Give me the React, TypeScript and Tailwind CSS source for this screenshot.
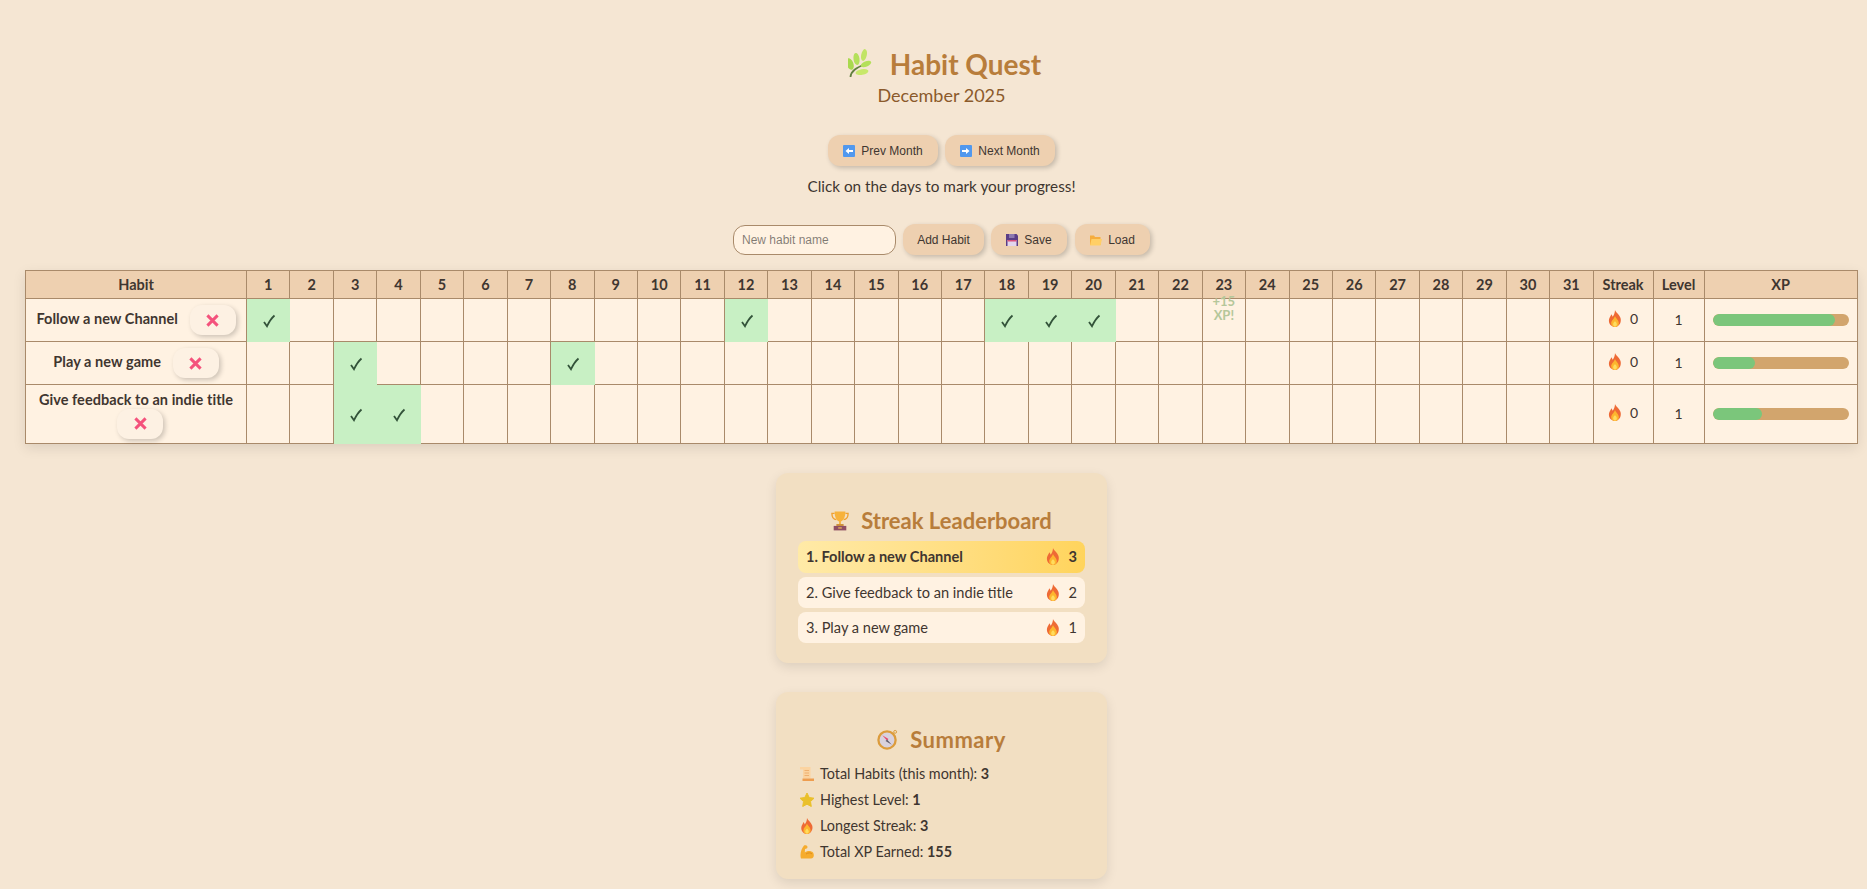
const days = Array.from({ length: 31 }, (_, i) => i + 1);

const Flame = ({ className = "w-[14px] h-[17px]" }: { className?: string }) => (
  <svg viewBox="0 0 16 20" className={`inline-block ${className}`}>
    <path d="M8 0c1 3 5 5 6.500 9.500C16 15 12.500 20 8 20S0 16 1 11c.5-2.500 2-3.500 2.500-6 1 1 1.500 2 1.800 3C6.500 6 8 3.500 8 0z" fill="#ee6a35" />
    <path d="M8 7c.5 2.500 4.500 4.500 4.500 8.500 0 2.500-2 4.500-4.500 4.500s-4.500-2-4.500-4.500C3.500 12.500 7 10.500 8 7z" fill="#fdb52e" />
    <path d="M8 13c.5 1 2.200 2 2.200 3.800C10.200 18.500 9 19.500 8 19.500s-2.200-1-2.200-2.700C5.800 15 7.500 14 8 13z" fill="#ffdc5e" />
  </svg>
);

const Check = () => (
  <svg viewBox="0 0 14 14" className="inline-block w-[14px] h-[14px]">
    <path d="M2 8l3 4.200C7 8 9 4.500 12.500 1.500" fill="none" stroke="#33533a" strokeWidth="1.800" />
  </svg>
);

const Cross = () => (
  <svg viewBox="0 0 14 14" className="w-[13px] h-[13px]">
    <path d="M1.500 1.500l11 11M12.500 1.500l-11 11" stroke="#f4527c" strokeWidth="3.200" />
  </svg>
);

const ArrowBox = ({ dir }: { dir: "left" | "right" }) => (
  <svg viewBox="0 0 12 12" className="w-3 h-3">
    <rect width="12" height="12" rx="1" fill="#5198ee" />
    <path d={dir === "left" ? "M2.500 6L6 3v2h4v2H6v2z" : "M9.500 6L6 3v2H2v2h4v2z"} fill="#fff" />
  </svg>
);

const Herb = () => (
  <svg viewBox="12 4 24 30" className="w-[24px] h-[30px]">
    <path d="M14.500 32C15 26 20 23 29 19" fill="none" stroke="#62803f" strokeWidth="1.800" />
    <ellipse cx="14" cy="19" rx="3.400" ry="6" transform="rotate(-20 14 19)" fill="#a9d94e" />
    <ellipse cx="20.500" cy="14" rx="3" ry="6" transform="rotate(-8 20.500 14)" fill="#b4e05a" />
    <ellipse cx="28" cy="10" rx="2.800" ry="6" transform="rotate(12 28 10)" fill="#c2e465" />
    <ellipse cx="30" cy="19" rx="2.600" ry="5.500" transform="rotate(68 30 19)" fill="#b4e05a" />
    <ellipse cx="26" cy="27" rx="2.800" ry="6.500" transform="rotate(80 26 27)" fill="#c8e86a" />
  </svg>
);

const Floppy = () => (
  <svg viewBox="0 0 12 12" className="w-3 h-3">
    <path d="M0 0h10.500L12 1.500V12H0z" fill="#5a3d86" />
    <rect x="3" y="0" width="5.500" height="4" fill="#8c78b0" />
    <rect x="1.500" y="6" width="9" height="6" fill="#e2d6ee" />
    <rect x="1.500" y="6" width="9" height="1.500" fill="#d8517c" />
  </svg>
);

const Folder = () => (
  <svg viewBox="0 0 12 12" className="w-3 h-3">
    <path d="M0 1.500h4l1 1.500h5.500v8H0z" fill="#f5ad3f" />
    <path d="M1.500 5H12l-1.500 6.500H0z" fill="#ffcf66" />
  </svg>
);

const Trophy = () => (
  <svg viewBox="0 0 20 22" className="w-[18px] h-[21px]">
    <path d="M4 3H1c0 5 2 7 5 7M16 3h3c0 5-2 7-5 7" fill="none" stroke="#f0a030" strokeWidth="1.500" />
    <path d="M4 1h12c0 6-2 10-5 11v3H9v-3C6 11 4 7 4 1z" fill="#f7b23b" />
    <rect x="6" y="15" width="8" height="2" fill="#c98a2e" />
    <rect x="3" y="17" width="14" height="5" fill="#8f4f63" />
    <rect x="8" y="18.500" width="4" height="1.500" fill="#e6b15a" />
  </svg>
);

const Compass = () => (
  <svg viewBox="0 0 22 22" className="w-[21px] h-[21px]">
    <circle cx="19" cy="3" r="1.500" fill="none" stroke="#d99a3a" />
    <circle cx="10.500" cy="11.500" r="9" fill="#d9d2dd" stroke="#dc9c3c" strokeWidth="2.400" />
    <path d="M5.500 6.500l6.500 4-1.500 1.500z" fill="#e8476b" />
    <path d="M15.500 16.500l-6.500-4 1.500-1.500z" fill="#5f5c6c" />
  </svg>
);

const Scroll = () => (
  <svg viewBox="0 0 14 14" className="w-[14px] h-[14px]">
    <path d="M0 0h10.500v11.500H3V2.500H0z" fill="#fbd3a0" />
    <path d="M4.500 3.500h4.500M4.500 6h4.500M4.500 8.500h4.500" stroke="#eeb070" />
    <path d="M2.500 11.500H14V14H2.500z" fill="#ee9d4f" />
  </svg>
);

const Star = () => (
  <svg viewBox="0 0 14 14" className="w-[14px] h-[14px]">
    <path d="M7 0l2.200 4.500 4.800.7-3.500 3.400.8 4.900L7 11.200 2.700 13.500l.8-4.900L0 5.200l4.800-.7z" fill="#eac02b" stroke="#eac02b" strokeLinejoin="round" />
  </svg>
);

const Muscle = () => (
  <svg viewBox="0 0 14 14" className="w-[14px] h-[14px]">
    <path d="M1 13.500C-.5 9 1.500 3.500 4 .5c1.500-.5 3.500 0 3.500 1.500s-1.500 1.800-2.500 2L4.800 7.500C7 5.500 11 5.500 13 7.500c1.500 2 1 6-2 6z" fill="#f6ac2d" />
    <path d="M6 9c2-1.500 5-1.500 6 0" fill="none" stroke="#e08e1c" />
  </svg>
);

const btn = "h-[31px] rounded-xl bg-[#eed0b0] shadow-[2px_2px_5px_rgba(0,0,0,0.2)] text-[#3f3630] text-[12px] font-['Liberation_Sans',sans-serif] flex items-center justify-center gap-[6px]";
const cardShadow = "shadow-[0_4px_12px_rgba(0,0,0,0.1)]";

const habits = [
  { name: "Follow a new Channel", done: [1, 12, 18, 19, 20], xp: 90 },
  { name: "Play a new game", done: [3, 8], xp: 31 },
  { name: "Give feedback to an indie title", done: [3, 4], xp: 36 },
];

const DeleteBtn = () => (
  <button className="inline-flex items-center justify-center ml-[8px] w-[46px] h-[30px] rounded-xl bg-[#fdf1e3] shadow-[2px_2px_5px_rgba(0,0,0,0.2)] align-middle">
    <Cross />
  </button>
);

const HabitTable = () => (
  <div className="px-[25px] mt-[15px]">
    <table className={`w-[1832px] table-fixed border-collapse bg-[#fff2e2] text-[#3f3630] ${cardShadow}`}>
      <colgroup>
        <col className="w-[221px]" />
        {days.map((d) => (
          <col key={d} className="w-[43.450px]" />
        ))}
        <col className="w-[60px]" />
        <col className="w-[51px]" />
        <col className="w-[153px]" />
      </colgroup>
      <thead>
        <tr className="h-[28px] bg-[#eed0b0] text-[14.500px] font-bold">
          <th className="border border-[#a98a6a] font-bold">Habit</th>
          {days.map((d) => (
            <th key={d} className="border border-[#a98a6a] font-bold">{d}</th>
          ))}
          <th className="border border-[#a98a6a] font-bold">Streak</th>
          <th className="border border-[#a98a6a] font-bold">Level</th>
          <th className="border border-[#a98a6a] font-bold">XP</th>
        </tr>
      </thead>
      <tbody>
        {habits.map((h, row) => (
          <tr key={h.name} className={row === 2 ? "h-[59px]" : "h-[43px]"}>
            <td className="border border-[#a98a6a] text-center text-[14.500px] tracking-[0.05px] font-bold leading-[19px] px-1">
              {h.name} <DeleteBtn />
            </td>
            {days.map((d) => (
              <td key={d} className="relative border border-[#a98a6a] text-center p-0">
                {h.done.includes(d) && (
                  <span className="absolute left-0 top-0 -right-px -bottom-px bg-[#c8f0c4] flex items-center justify-center">
                    <Check />
                  </span>
                )}
                {row === 0 && d === 23 && (
                  <span className="absolute inset-x-0 -top-[5.500px] text-[13px] leading-[14px] font-bold text-[#b5c79a]">+15 XP!</span>
                )}
              </td>
            ))}
            <td className="border border-[#a98a6a] text-center text-[14px]">
              <span className="inline-flex items-center gap-[8px]"><Flame /> 0</span>
            </td>
            <td className="border border-[#a98a6a] text-center text-[14px] pb-[2px]">1</td>
            <td className="border border-[#a98a6a] px-[8px]">
              <div className="h-[12px] rounded-full bg-[#d2a56d] overflow-hidden">
                <div className="h-full rounded-full bg-[#7bc67b]" style={{ width: `${h.xp}%` }} />
              </div>
            </td>
          </tr>
        ))}
      </tbody>
    </table>
  </div>
);

const Leaderboard = () => (
  <section className={`w-[331px] h-[190px] mt-[29px] rounded-xl bg-[#f2dfc2] px-[22px] pt-[31px] ${cardShadow}`}>
    <h2 className="flex items-center justify-center gap-[12px] h-[32px] text-[22px] font-bold text-[#b87d3b]">
      <Trophy /> Streak Leaderboard
    </h2>
    <ul className="mt-[5px] flex flex-col gap-[4px] text-[14.600px] text-[#3f3630]">
      <li className="h-[32px] rounded-lg px-2 flex items-center justify-between font-bold bg-gradient-to-r from-[#ffeaa7] to-[#ffd45c]">
        <span>1. Follow a new Channel</span>
        <span className="flex items-center gap-[9px]"><Flame /> 3</span>
      </li>
      <li className="h-[31px] rounded-lg px-2 flex items-center justify-between bg-[#fff2e2]">
        <span>2. Give feedback to an indie title</span>
        <span className="flex items-center gap-[9px]"><Flame /> 2</span>
      </li>
      <li className="h-[31px] rounded-lg px-2 flex items-center justify-between bg-[#fff2e2]">
        <span>3. Play a new game</span>
        <span className="flex items-center gap-[9px]"><Flame /> 1</span>
      </li>
    </ul>
  </section>
);

const Summary = () => (
  <section className={`w-[331px] h-[187px] mt-[29px] rounded-xl bg-[#f2dfc2] px-[24px] pt-[31px] ${cardShadow}`}>
    <h2 className="flex items-center justify-center gap-[12px] h-[32px] text-[22px] tracking-[0.5px] font-bold text-[#b87d3b]">
      <Compass /> Summary
    </h2>
    <ul className="mt-[6px] flex flex-col text-[14.400px] text-[#3f3630]">
      <li className="h-[26px] flex items-center gap-[6px]"><Scroll /><span>Total Habits (this month): <b>3</b></span></li>
      <li className="h-[26px] flex items-center gap-[6px]"><Star /><span>Highest Level: <b>1</b></span></li>
      <li className="h-[26px] flex items-center gap-[6px]"><Flame className="w-[14px] h-[16px]" /><span>Longest Streak: <b>3</b></span></li>
      <li className="h-[26px] flex items-center gap-[6px]"><Muscle /><span>Total XP Earned: <b>155</b></span></li>
    </ul>
  </section>
);

export default function App() {
  return (
    <div className="min-h-screen bg-[#f5e6d3] font-['Lato',sans-serif] pt-[47px] pb-[10px] flex flex-col">
      <header className="flex flex-col items-center pl-[16px]">
        <h1 className="flex items-center gap-[18px] h-[34px] pl-[6px] text-[28px] font-bold text-[#b87d3b]">
          <Herb /> Habit Quest
        </h1>
        <p className="mt-[3px] text-[18px] leading-[22px] text-[#8b5a2b]">December 2025</p>
        <div className="mt-[29px] flex gap-[7px]">
          <button className={`${btn} w-[110px]`}><ArrowBox dir="left" /> Prev Month</button>
          <button className={`${btn} w-[110px]`}><ArrowBox dir="right" /> Next Month</button>
        </div>
        <p className="mt-[10px] text-[15.300px] leading-[20px] text-[#3f3630]">Click on the days to mark your progress!</p>
        <div className="mt-[28px] flex items-center gap-[7px]">
          <input
            placeholder="New habit name"
            className="w-[163px] h-[30px] rounded-xl border border-[#a98a6a] bg-[#fff2e2] px-2 text-[12px] font-['Liberation_Sans',sans-serif] outline-none"
          />
          <button className={`${btn} w-[81px]`}>Add Habit</button>
          <button className={`${btn} w-[76px]`}><Floppy /> Save</button>
          <button className={`${btn} w-[75px] ml-px`}><Folder /> Load</button>
        </div>
      </header>
      <HabitTable />
      <div className="flex flex-col items-center pl-[16px]">
        <Leaderboard />
        <Summary />
      </div>
    </div>
  );
}
